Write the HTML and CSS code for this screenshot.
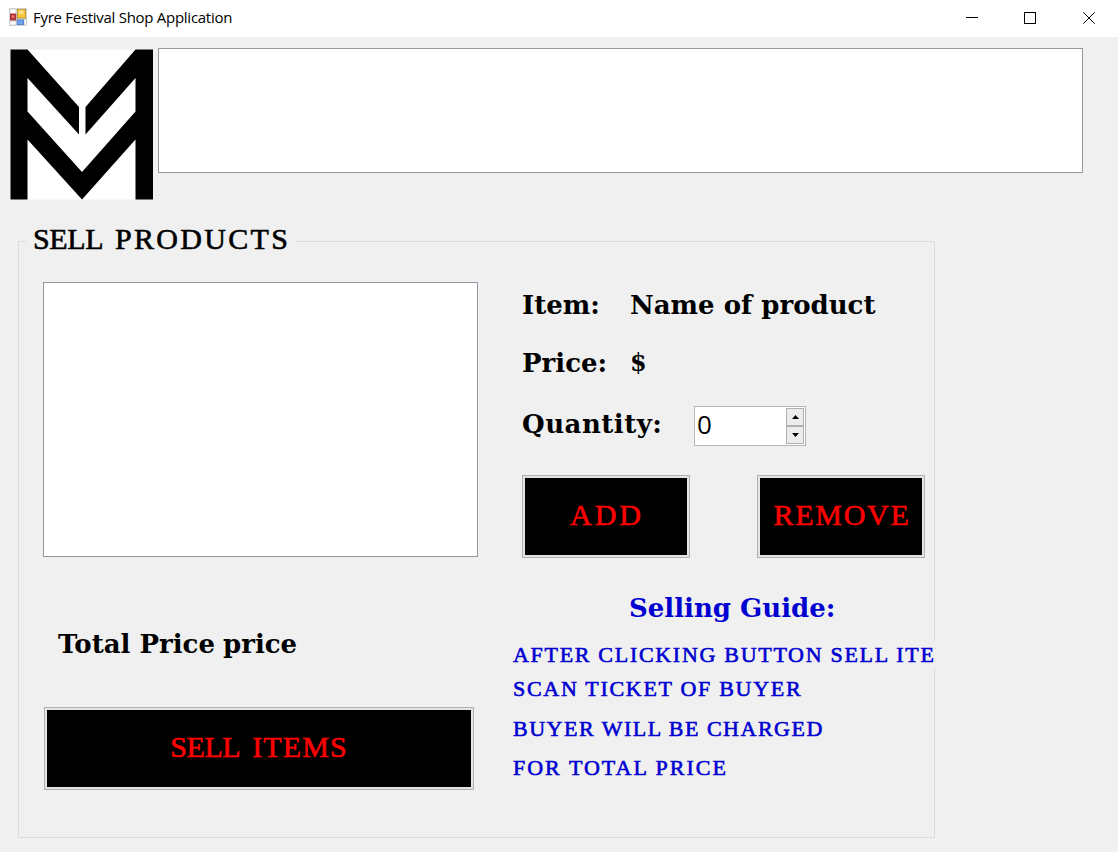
FILE: index.html
```html
<!DOCTYPE html>
<html lang="en">
<head>
<meta charset="utf-8">
<title>Fyre Festival Shop Application</title>
<link rel="stylesheet" href="styles.css">
</head>
<body>
<div class="window">
  <header class="titlebar">
    <svg class="app-icon" width="18" height="18" viewBox="0 0 18 18">
      <rect width="18" height="18" fill="#d2d2d2"/>
      <path d="M1.500 1.500h5v4h-5zM1.500 13.500h5v3h-5zM15.500 12h1.500v4.500h-1.500z" fill="#fff"/>
      <rect x="1.400" y="6" width="5.400" height="6" fill="#c4393b" stroke="#96282c" stroke-width=".8"/>
      <rect x="3" y="7.500" width="2" height="2" fill="#e58a86"/>
      <rect x="8.400" y="1.400" width="8.200" height="8.600" fill="#f6c73a" stroke="#c0901c" stroke-width=".8"/>
      <rect x="9.500" y="2.500" width="5" height="3.500" fill="#fbe08a"/>
      <rect x="8.200" y="12" width="6.300" height="4.600" fill="#6ea2f0" stroke="#4576cc" stroke-width=".8"/>
    </svg>
    <span class="title">Fyre Festival Shop Application</span>
    <svg class="controls" width="132" height="12" viewBox="0 0 132 12" fill="none" stroke="#000">
      <path d="M0 5.500h12"/>
      <rect x="58.500" y=".5" width="11" height="11"/>
      <path d="M117.300 .3l11.400 11.400M128.700 .3l-11.400 11.400"/>
    </svg>
  </header>
  <main class="form">
    <div class="banner">
      <svg class="logo" width="143" height="151" viewBox="0 0 143 151">
        <rect x=".5" y=".5" width="142.500" height="150" fill="#fff"/>
        <path d="M.5 .5H17.500L69 58V85.500L17.500 29V62.500L72 123L125.500 62.500V29L75.500 85.500V58L125.500 .5H143V150.500H125.500V90.500L72 150.500L17.500 90.500V150.500H.5Z"/>
      </svg>
      <div class="banner-box"></div>
    </div>
    <section class="group">
      <h1 class="legend caps"><span class="word-sell">SELL</span><span class="word-products">PRODUCTS</span></h1>
      <div class="columns">
        <div class="left">
          <div class="list"></div>
          <div class="total label"><span>Total Price</span><span class="total-value">price</span></div>
          <button class="btn sell caps"><span class="word-sell">SELL</span><span class="word-items">ITEMS</span></button>
        </div>
        <div class="right">
          <div class="row item label"><span class="key">Item:</span><span>Name of product</span></div>
          <div class="row price label"><span class="key">Price:</span><span class="currency">$</span></div>
          <div class="row qty label"><span class="key wide">Quantity:</span>
            <div class="spinner"><span class="value">0</span>
              <div class="arrows">
                <span class="arrow"><svg width="7" height="4" viewBox="0 0 7 4"><path d="M0 4L3.500 0L7 4Z"/></svg></span>
                <span class="arrow"><svg width="7" height="4" viewBox="0 0 7 4"><path d="M0 0L3.500 4L7 0Z"/></svg></span>
              </div>
            </div>
          </div>
          <div class="buttons">
            <button class="btn add caps">ADD</button>
            <button class="btn remove caps">REMOVE</button>
          </div>
          <h2 class="guide-title label">Selling Guide:</h2>
          <div class="guide caps">
            <p class="g1">AFTER CLICKING BUTTON SELL ITEM</p>
            <p class="g2">SCAN TICKET OF BUYER</p>
            <p class="g3">BUYER WILL BE CHARGED</p>
            <p class="g4">FOR TOTAL PRICE</p>
          </div>
        </div>
      </div>
    </section>
  </main>
</div>
</body>
</html>
```
FILE: styles.css
```css
* { box-sizing: border-box; }
body { margin: 0; background: #fff; overflow: hidden; }
h1, h2, p { margin: 0; font-weight: inherit; }
svg { display: block; flex: none; }

.window { width: 1118px; height: 852px; background: #f0f0f0; color: #000; overflow: hidden; }
.titlebar { display: flex; align-items: center; height: 37px; padding: 0 20px 0 9px; background: #fff; }
.app-icon { margin-bottom: 3px; }
.title { flex: 1; margin: 0 0 4px 6px; font: 15px/20px "Open Sans", sans-serif; letter-spacing: -0.28px; }
.controls { margin-bottom: 1px; }

.form { padding: 11px 0 0 10px; }
.banner { display: flex; gap: 5px; height: 152px; }
.logo { margin-top: 1px; }
.banner-box { width: 925px; height: 125px; background: #fff; border: 1px solid #9299a3; }

.caps { font-family: "Liberation Serif", serif; font-weight: 400; font-size: 30px; -webkit-text-stroke: 0.6px currentColor; white-space: nowrap; }
.label { font-family: "DejaVu Serif", serif; font-weight: 700; font-size: 26px; line-height: 32px; letter-spacing: 0; white-space: nowrap; }

.group { width: 917px; height: 597px; margin: 41px 0 0 8px; border: 1px solid #dcdcdc; }
.legend { display: flex; width: 269px; height: 32px; margin: -18px 0 0 7px; padding-left: 7px; background: #f0f0f0; line-height: 30px; }
.word-sell { margin-right: 12px; letter-spacing: -0.4px; }
.word-products { letter-spacing: 2.3px; }
.word-items { letter-spacing: 1.1px; }
.columns { display: flex; margin-top: 26px; }
.left { flex: none; width: 435px; margin-left: 24px; }
.list { height: 275px; background: #fff; border: 1px solid #9299a3; }
.total { display: flex; margin: 71px 0 0 15px; }
.total-value { margin-left: 8px; }
.btn { display: flex; align-items: center; justify-content: center; width: 168px; height: 83px; padding: 0 0 3px; background: #000; color: #f00; border: 1px solid #b0b0b0; box-shadow: inset 0 0 0 2px #e4e4e4; }
.add { padding-left: 2px; letter-spacing: 3px; }
.remove { padding-left: 2px; letter-spacing: 1.7px; }
.sell { width: 430px; margin: 47px 0 0 1px; padding-bottom: 4px; }

.right { flex: none; width: 424px; margin-left: 34px; }
.row { display: flex; align-items: center; padding-left: 10px; }
.key { width: 108px; }
.wide { width: 172px; margin-top: -4px; letter-spacing: 0.5px; }
.currency { font-size: 24px; }
.item { margin-top: 7px; }
.price { margin-top: 26px; }
.qty { height: 40px; margin-top: 27px; }
.spinner { display: flex; width: 112px; height: 40px; padding: 1px; background: #fff; border: 1px solid #b4b4bc; letter-spacing: 0; }
.value { flex: 1; padding-left: 1px; font: 26px/33px "Open Sans", sans-serif; }
.arrows { display: flex; flex-direction: column; width: 18px; }
.arrow { display: flex; flex: 1; align-items: center; justify-content: center; background: #ececec; border: 1px solid #b0b0b0; }
.buttons { display: flex; gap: 67px; margin: 29px 0 0 10px; }
.guide-title { margin: 34px 0 0 117px; color: #0000d0; }
.guide { color: #0000d0; font-size: 22px; line-height: 26px; }
.guide p { padding-left: 1px; background: #f0f0f0; overflow: hidden; }
.guide .g1 { margin-top: 18px; letter-spacing: 1.7px; }
.guide .g2 { width: 400px; margin-top: 8px; letter-spacing: 1.7px; }
.guide .g3 { width: 400px; margin-top: 14px; letter-spacing: 1.5px; }
.guide .g4 { width: 400px; margin-top: 13px; letter-spacing: 2px; }
```
